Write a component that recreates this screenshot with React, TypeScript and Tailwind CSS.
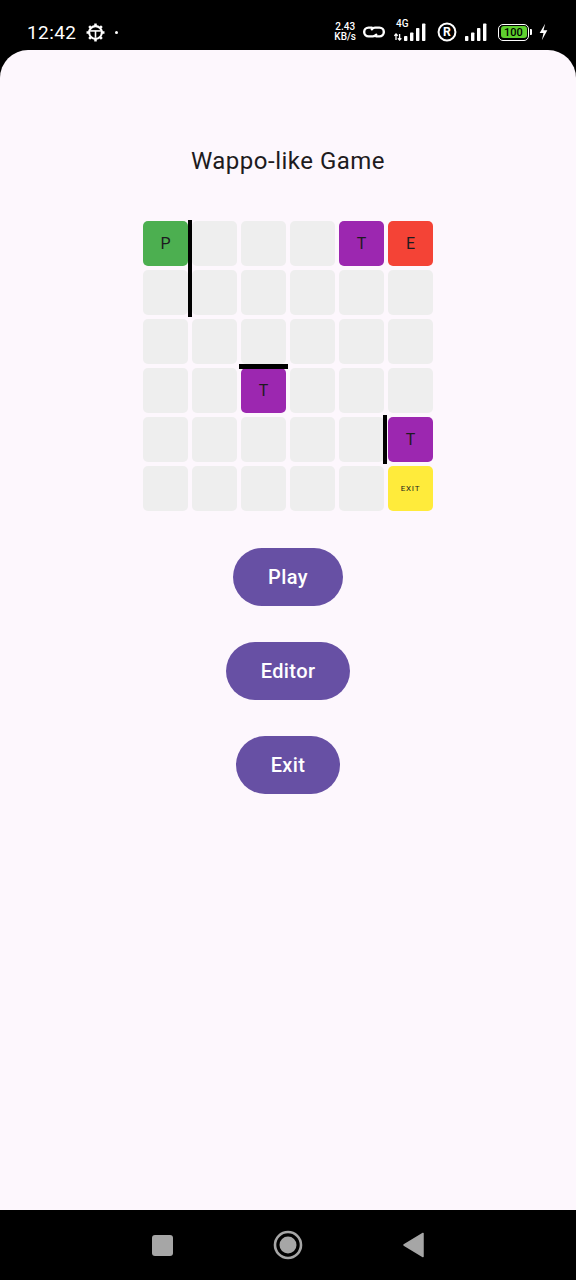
import React from "react";

type Cell = { bg: string; label?: string; small?: boolean };

const G = "bg-[#eeeeee]";

function cellAt(r: number, c: number): Cell {
  if (r === 0 && c === 0) return { bg: "bg-[#4caf50]", label: "P" };
  if (r === 0 && c === 4) return { bg: "bg-[#9c27b0]", label: "T" };
  if (r === 0 && c === 5) return { bg: "bg-[#f44336]", label: "E" };
  if (r === 3 && c === 2) return { bg: "bg-[#9c27b0]", label: "T" };
  if (r === 4 && c === 5) return { bg: "bg-[#9c27b0]", label: "T" };
  if (r === 5 && c === 5) return { bg: "bg-[#ffeb3b]", label: "EXIT", small: true };
  return { bg: G };
}

function StatusBar() {
  return (
    <div className="h-[50px] bg-black flex items-center pt-[14px] px-[27px] text-white" style={{ fontFamily: "Roboto, sans-serif" }}>
      <span className="text-[19px] leading-none tracking-[0.4px]">12:42</span>
      <svg className="ml-[10px]" width="19" height="19" viewBox="0 0 18 18">
        <circle cx="9" cy="9" r="6" fill="none" stroke="white" strokeWidth="2" />
        <g stroke="white" strokeWidth="2.4" strokeLinecap="butt">
          <line x1="9" y1="0.5" x2="9" y2="3" />
          <line x1="9" y1="15" x2="9" y2="17.5" />
          <line x1="0.5" y1="9" x2="3" y2="9" />
          <line x1="15" y1="9" x2="17.5" y2="9" />
          <line x1="3" y1="3" x2="4.8" y2="4.8" />
          <line x1="13.2" y1="13.2" x2="15" y2="15" />
          <line x1="15" y1="3" x2="13.2" y2="4.8" />
          <line x1="3" y1="15" x2="4.8" y2="13.2" />
        </g>
        <line x1="4" y1="7.5" x2="14" y2="7.5" stroke="white" strokeWidth="1.5" />
        <line x1="9" y1="7.5" x2="9" y2="14" stroke="white" strokeWidth="1.5" />
      </svg>
      <span className="ml-[10px] w-[3px] h-[3px] rounded-full bg-white" />
      <div className="ml-auto flex items-center mr-[0px]">
        <div className="flex flex-col items-center text-[10px] font-medium">
          <span className="leading-[10px] block">2.43</span>
          <span className="leading-[10px] block">KB/s</span>
        </div>
        <svg width="24" height="18" viewBox="0 0 22 16" className="ml-[6px]">
          <path d="M9 4 H6 a4 4 0 0 0 0 8 h4 a4 4 0 0 0 3-1.5" fill="none" stroke="white" strokeWidth="2.2" strokeLinecap="round" />
          <path d="M13 12 h3 a4 4 0 0 0 0-8 h-4 a4 4 0 0 0-3 1.5" fill="none" stroke="white" strokeWidth="2.2" strokeLinecap="round" />
        </svg>
        <div className="relative w-[36px] h-[20px] ml-[8px]">
          <span className="absolute left-[2px] top-[-3px] text-[10px] font-medium leading-none">4G</span>
          <svg className="absolute left-0 top-0" width="36" height="20" viewBox="0 0 36 20">
            <path d="M2 12 v6 M0.3 13.8 l1.7-1.8 l1.7 1.8" stroke="white" strokeWidth="1.3" fill="none" />
            <path d="M5.6 12 v6 M3.9 16.2 l1.7 1.8 l1.7-1.8" stroke="white" strokeWidth="1.3" fill="none" />
            <rect x="10" y="14" width="3.4" height="5" rx="0.8" fill="white" />
            <rect x="16" y="10.5" width="3.4" height="8.5" rx="0.8" fill="white" />
            <rect x="22" y="6" width="3.4" height="13" rx="0.8" fill="white" />
            <rect x="28" y="1.5" width="3.4" height="17.5" rx="0.8" fill="white" />
          </svg>
        </div>
        <svg width="20" height="20" viewBox="0 0 18 18" className="ml-[7px]">
          <circle cx="9" cy="9" r="7.6" fill="none" stroke="white" strokeWidth="1.8" />
          <text x="9" y="13" textAnchor="middle" fontSize="11" fontWeight="700" fill="white" fontFamily="Roboto, sans-serif">R</text>
        </svg>
        <svg width="26" height="20" viewBox="0 0 26 20" className="ml-[7px]">
          <rect x="1" y="14" width="3.4" height="5" rx="0.8" fill="white" />
          <rect x="7" y="10.5" width="3.4" height="8.5" rx="0.8" fill="white" />
          <rect x="13" y="6" width="3.4" height="13" rx="0.8" fill="white" />
          <rect x="19" y="1.5" width="3.4" height="17.5" rx="0.8" fill="white" />
        </svg>
        <div className="flex items-center ml-[8px]">
          <div className="w-[31px] h-[17px] rounded-[5px] border-[1.5px] border-white p-[1.5px]">
            <div className="w-full h-full rounded-[3px] bg-[#5fd02f] flex items-center justify-center text-[11px] font-medium leading-none text-black">100</div>
          </div>
          <div className="w-[2px] h-[6px] bg-white rounded-r-[1px] ml-[1px]" />
        </div>
        <svg width="11" height="18" viewBox="0 0 10 16" className="ml-[6px]">
          <path d="M6.5 0.5 L1.5 9 H5 L3.5 15.5 L8.5 6.5 H5 Z" fill="white" />
        </svg>
      </div>
    </div>
  );
}

function NavBar() {
  return (
    <div className="h-[70px] bg-black flex items-center justify-center">
      <div className="flex items-center w-[272px] justify-between">
        <div className="w-[21px] h-[21px] rounded-[3px] bg-[#a6a6a6]" />
        <svg width="30" height="30" viewBox="0 0 30 30">
          <circle cx="15" cy="15" r="13" fill="none" stroke="#a6a6a6" strokeWidth="2.6" />
          <circle cx="15" cy="15" r="8.5" fill="#a6a6a6" />
        </svg>
        <svg width="22" height="26" viewBox="0 0 22 26">
          <path d="M21 1.5 V24.5 L2 13 Z" fill="#a6a6a6" stroke="#a6a6a6" strokeWidth="1.5" strokeLinejoin="round" />
        </svg>
      </div>
    </div>
  );
}

export default function App() {
  const rows = [0, 1, 2, 3, 4, 5];
  return (
    <div className="w-[576px] h-[1280px] bg-black flex flex-col overflow-hidden" style={{ fontFamily: "Roboto, sans-serif" }}>
      <StatusBar />
      <div className="flex-1 bg-[#fdf7fd] rounded-t-[28px] flex flex-col items-center pt-[96px]">
        <h1 className="text-[24px] leading-[30px] text-[#1d1b20] tracking-[0.5px]">Wappo-like Game</h1>
        <div className="relative mt-[45px]">
          <div className="grid grid-cols-[repeat(6,45px)] grid-rows-[repeat(6,45px)] gap-[4px]">
            {rows.map((r) =>
              rows.map((c) => {
                const cell = cellAt(r, c);
                return (
                  <div key={`${r}-${c}`} className={`${cell.bg} rounded-[5px] flex items-center justify-center text-[#1d1b20]`}>
                    {cell.label && (
                      <span className={cell.small ? "text-[8px] tracking-[0.8px]" : "text-[16px]"}>{cell.label}</span>
                    )}
                  </div>
                );
              })
            )}
          </div>
          <div className="absolute left-[45px] top-[-1px] w-[4px] h-[97px] bg-black" />
          <div className="absolute left-[96px] top-[143px] w-[49px] h-[5px] bg-black" />
          <div className="absolute left-[240px] top-[194px] w-[4px] h-[49px] bg-black" />
        </div>
        <div className="mt-[37px] flex flex-col items-center gap-[36px]">
          {["Play", "Editor", "Exit"].map((t) => (
            <button key={t} className="h-[58px] px-[35px] rounded-full bg-[#6750a4] text-white text-[20px] font-medium tracking-[0.4px]">
              {t}
            </button>
          ))}
        </div>
      </div>
      <NavBar />
    </div>
  );
}
